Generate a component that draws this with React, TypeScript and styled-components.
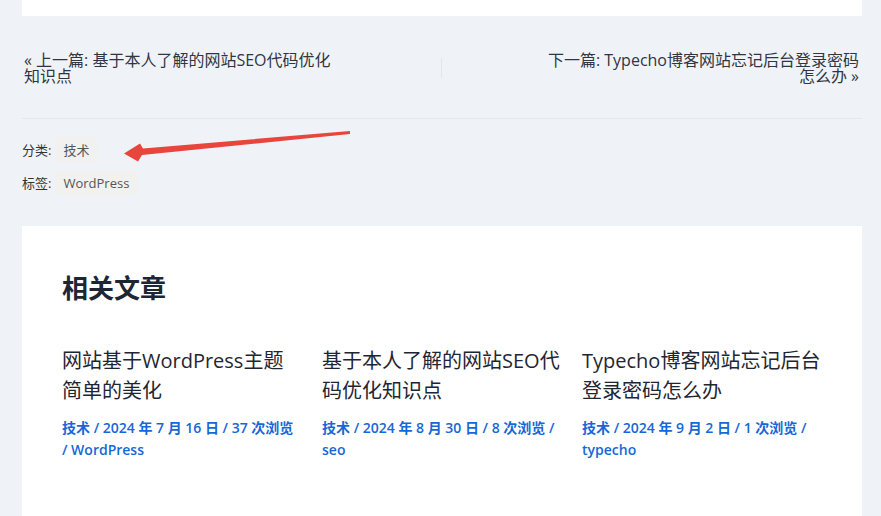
import React from "react";
import styled, { createGlobalStyle } from "styled-components";

const GlobalStyle = createGlobalStyle`
  body {
    margin: 0;
    background: #eff3f8;
    font-family: "Open Sans", "Noto Sans CJK SC", sans-serif;
    color: #2f3542;
  }
  a {
    text-decoration: none;
    color: inherit;
  }
`;

const Page = styled.div`
  width: 840px;
  padding-left: 22px;
  padding-bottom: 40px;
`;

const TopCard = styled.div`
  height: 16px;
  background: #fff;
`;

const PostNav = styled.nav`
  display: flex;
  align-items: flex-start;
  margin-top: 36px;
  padding-bottom: 34px;
  border-bottom: 1px solid #e3e8ee;
`;

const NavSide = styled.div<{ $align: "left" | "right" }>`
  flex: 1;
  display: flex;
  justify-content: ${(p) => (p.$align === "left" ? "flex-start" : "flex-end")};
  padding: ${(p) => (p.$align === "left" ? "0 0 0 2px" : "0 3px 0 0")};
`;

const NavLink = styled.a<{ $align: "left" | "right" }>`
  max-width: 316px;
  font-size: 16px;
  line-height: 16px;
  color: #2f3542;
  text-align: ${(p) => p.$align};
`;

const NavDivider = styled.span`
  width: 1px;
  height: 20px;
  margin-top: 6px;
  background: #e1e6ec;
`;

const Meta = styled.div`
  position: relative;
  display: flex;
  flex-direction: column;
  gap: 8px;
  padding-top: 18px;
`;

const MetaRow = styled.div`
  display: flex;
  align-items: center;
  gap: 4px;
  font-size: 13px;
  color: #333;
`;

const Tag = styled.a`
  display: inline-flex;
  align-items: center;
  height: 25px;
  padding: 0 8px;
  border-radius: 4px;
  background: #f1f1f0;
  color: #555;
  font-size: 13px;
`;

const Arrow = styled.svg`
  position: absolute;
  left: 100px;
  top: 9px;
`;

const RelatedCard = styled.section`
  margin-top: 31px;
  background: #fff;
  padding: 43px 40px 60px;
`;

const RelatedTitle = styled.h2`
  margin: 0 0 38px;
  font-size: 26px;
  line-height: 39px;
  font-weight: 700;
  color: #1e2533;
`;

const PostGrid = styled.div`
  display: grid;
  grid-template-columns: repeat(3, 1fr);
  column-gap: 20px;
`;

const PostItem = styled.article`
  display: flex;
  flex-direction: column;
  gap: 11px;
`;

const PostTitle = styled.a`
  font-size: 20px;
  line-height: 30px;
  color: #1f2633;
`;

const PostMeta = styled.div`
  font-size: 14px;
  line-height: 22px;
  font-weight: 600;
  color: #1767d6;
`;

const posts = [
  {
    title: "网站基于WordPress主题简单的美化",
    date: "2024 年 7 月 16 日",
    views: 37,
    tag: "WordPress",
  },
  {
    title: "基于本人了解的网站SEO代码优化知识点",
    date: "2024 年 8 月 30 日",
    views: 8,
    tag: "seo",
  },
  {
    title: "Typecho博客网站忘记后台登录密码怎么办",
    date: "2024 年 9 月 2 日",
    views: 1,
    tag: "typecho",
  },
];

const App = () => {
  return (
    <>
      <GlobalStyle />
      <Page>
        <TopCard />
        <PostNav>
          <NavSide $align="left">
            <NavLink $align="left" href="#">
              « 上一篇: 基于本人了解的网站SEO代码优化知识点
            </NavLink>
          </NavSide>
          <NavDivider />
          <NavSide $align="right">
            <NavLink $align="right" href="#">
              下一篇: Typecho博客网站忘记后台登录密码怎么办 »
            </NavLink>
          </NavSide>
        </PostNav>
        <Meta>
          <MetaRow>
            分类: <Tag href="#">技术</Tag>
          </MetaRow>
          <MetaRow>
            标签: <Tag href="#">WordPress</Tag>
          </MetaRow>
          <Arrow width="254" height="38" viewBox="0 0 254 38">
            <polygon
              points="228,3 21,20.5 18,15.5 2,25.5 16,33.5 20,27 228,6"
              fill="#e8453c"
            />
          </Arrow>
        </Meta>
        <RelatedCard>
          <RelatedTitle>相关文章</RelatedTitle>
          <PostGrid>
            {posts.map((post) => (
              <PostItem key={post.title}>
                <PostTitle href="#">{post.title}</PostTitle>
                <PostMeta>
                  {`技术 / ${post.date} / ${post.views} 次浏览 / ${post.tag}`}
                </PostMeta>
              </PostItem>
            ))}
          </PostGrid>
        </RelatedCard>
      </Page>
    </>
  );
};

export default App;
